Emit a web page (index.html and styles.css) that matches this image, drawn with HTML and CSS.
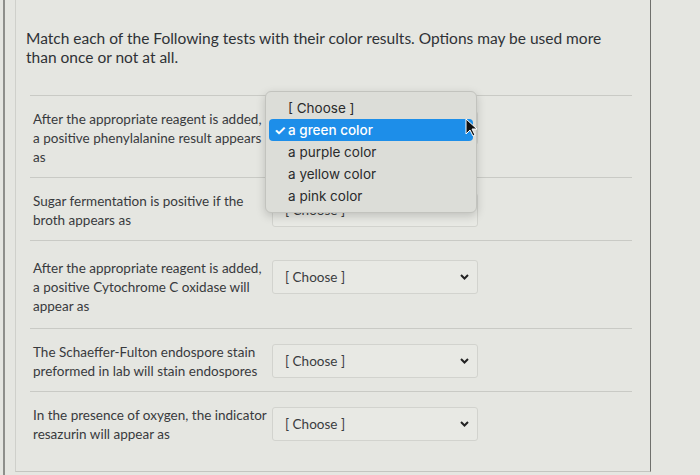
FILE: index.html
```html
<!DOCTYPE html>
<html lang="en">
<head>
  <meta charset="UTF-8">
  <meta name="viewport" content="width=device-width, initial-scale=1.0">
  <title>Matching Question</title>
  <link rel="stylesheet" href="styles.css">
</head>
<body>

  <div class="screen">
    <div class="quiz">
      <p class="prompt">Match each of the Following tests with their color results. Options may be used more than once or not at all.</p>

      <div class="answers">
        <div class="answer">
          <div class="answer-text">After the appropriate reagent is added, a positive phenylalanine result appears as</div>
          <div class="select-wrap open">
            <div class="select"><span>[ Choose ]</span><svg class="chevron" width="9" height="6" viewBox="0 0 9 6"><path d="M1 1l3.5 3.5L8 1" fill="none" stroke="#222" stroke-width="2"/></svg></div>
            <ul class="popup">
              <li>[ Choose ]</li>
              <li class="selected"><span class="check">✓</span>a green color</li>
              <li>a purple color</li>
              <li>a yellow color</li>
              <li>a pink color</li>
            </ul>
            <svg class="cursor" width="14" height="20" viewBox="0 0 14 20"><path d="M1 1v15l4-4 3 6 2-1-3-6h5z" fill="#111" stroke="#fff" stroke-width="1"/></svg>
          </div>
        </div>

        <div class="answer">
          <div class="answer-text">Sugar fermentation is positive if the broth appears as</div>
          <div class="select-wrap">
            <div class="select"><span>[ Choose ]</span><svg class="chevron" width="9" height="6" viewBox="0 0 9 6"><path d="M1 1l3.5 3.5L8 1" fill="none" stroke="#222" stroke-width="2"/></svg></div>
          </div>
        </div>

        <div class="answer tall">
          <div class="answer-text">After the appropriate reagent is added, a positive Cytochrome C oxidase will appear as</div>
          <div class="select-wrap">
            <div class="select"><span>[ Choose ]</span><svg class="chevron" width="9" height="6" viewBox="0 0 9 6"><path d="M1 1l3.5 3.5L8 1" fill="none" stroke="#222" stroke-width="2"/></svg></div>
          </div>
        </div>

        <div class="answer">
          <div class="answer-text">The Schaeffer-Fulton endospore stain preformed in lab will stain endospores</div>
          <div class="select-wrap">
            <div class="select"><span>[ Choose ]</span><svg class="chevron" width="9" height="6" viewBox="0 0 9 6"><path d="M1 1l3.5 3.5L8 1" fill="none" stroke="#222" stroke-width="2"/></svg></div>
          </div>
        </div>

        <div class="answer">
          <div class="answer-text">In the presence of oxygen, the indicator resazurin will appear as</div>
          <div class="select-wrap">
            <div class="select"><span>[ Choose ]</span><svg class="chevron" width="9" height="6" viewBox="0 0 9 6"><path d="M1 1l3.5 3.5L8 1" fill="none" stroke="#222" stroke-width="2"/></svg></div>
          </div>
        </div>
      </div>
    </div>
  </div>

</body>
</html>
```

FILE: styles.css
```css
body {
  margin: 0;
  background-color: #e5e6e1;
  font-family: Lato, "Liberation Sans", sans-serif;
  color: #2f3236;
  height: 475px;
  overflow: hidden;
}

.screen {
  margin-left: 3px;
  height: 475px;
  border-left: 2px solid #8e8f8b;
}

.quiz {
  margin-left: 10px;
  width: 634px;
  height: 471px;
  border-left: 1px solid #cfd0cb;
  border-right: 1px solid #6f706c;
  border-bottom: 1px solid #c4c5c0;
}

.prompt {
  margin: 0;
  padding: 29px 20px 0 10px;
  font-size: 15.5px;
  line-height: 19px;
  height: 66px;
}

.answers {
  margin-left: 14px;
  width: 602px;
}

.answer {
  display: flex;
  align-items: flex-start;
  gap: 3px;
  padding: 14px 0 10px 3px;
  border-top: 1px solid #c9cac5;
  font-size: 13.5px;
  line-height: 19px;
  color: #383a3d;
}

.answer.tall {
  padding-top: 18px;
  padding-bottom: 12px;
}

.answer-text {
  width: 236px;
}

.select-wrap {
  position: relative;
  margin-top: 1px;
}

.select-wrap.open {
  z-index: 2;
}

.select {
  display: flex;
  align-items: center;
  justify-content: space-between;
  box-sizing: border-box;
  width: 206px;
  height: 34px;
  padding: 0 8px 0 12px;
  border: 1px solid #d2d3ce;
  border-radius: 3px;
  background-color: #e8e9e4;
  color: #3a3c3f;
}

.popup {
  position: absolute;
  top: -20px;
  left: -7px;
  width: 212px;
  margin: 0;
  padding: 5px 3px;
  box-sizing: border-box;
  list-style: none;
  background-color: #dcddd8;
  border: 1px solid #c2c3be;
  border-radius: 6px;
  box-shadow: 0 3px 10px rgba(0, 0, 0, 0.18);
  font-family: Inter, "Noto Sans", sans-serif;
  font-size: 13.5px;
  color: #2a2b2c;
}

.popup li {
  position: relative;
  height: 22px;
  line-height: 22px;
  padding-left: 19px;
}

.popup li.selected {
  background-color: #1d8ee9;
  color: #fff;
  border-radius: 4px;
  font-weight: 500;
}

.check {
  position: absolute;
  left: 5px;
  font-weight: 700;
}

.cursor {
  position: absolute;
  top: 7px;
  left: 193px;
  z-index: 3;
}
```
